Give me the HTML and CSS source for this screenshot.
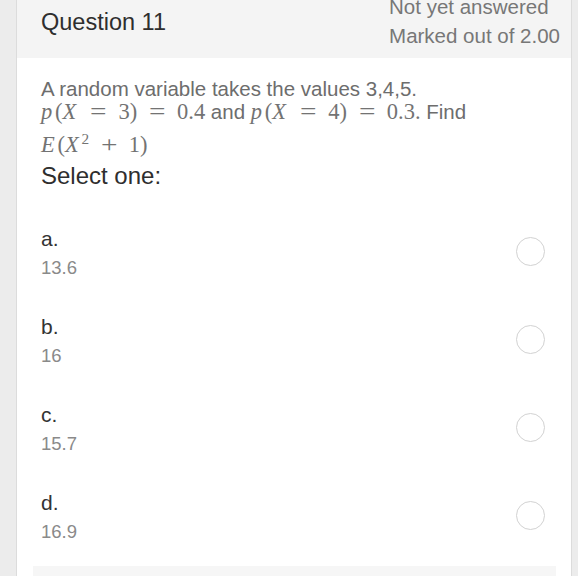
FILE: index.html
```html
<!DOCTYPE html>
<html lang="en">
<head>
  <meta charset="UTF-8">
  <meta name="viewport" content="width=device-width, initial-scale=1.0">
  <title>Question 11</title>
  <link rel="stylesheet" href="styles.css">
</head>
<body>
  <div class="page">
    <div class="card">
      <div class="que-header">
        <h3 class="que-title">Question 11</h3>
        <div class="que-status">
          <div>Not yet answered</div>
          <div>Marked out of 2.00</div>
        </div>
      </div>

      <div class="que-body">
        <div class="q-line">A random variable takes the values 3,4,5.</div>
        <div class="q-line">
          <span class="math"><i class="mi">p</i>(<i class="mi">X</i><span class="mo">=</span>3)<span class="mo">=</span>0.4</span>
          and
          <span class="math"><i class="mi">p</i>(<i class="mi">X</i><span class="mo">=</span>4)<span class="mo">=</span>0.3.</span>
          Find
        </div>
        <div class="q-line tall">
          <span class="math"><i class="mi">E</i>(<i class="mi">X</i><sup>2</sup><span class="mo">+</span>1)</span>
        </div>

        <div class="prompt">Select one:</div>

        <div class="answers">
          <label class="answer">
            <div class="answer-text">
              <div class="answer-letter">a.</div>
              <div class="answer-value">13.6</div>
            </div>
            <span class="radio"></span>
          </label>
          <label class="answer">
            <div class="answer-text">
              <div class="answer-letter">b.</div>
              <div class="answer-value">16</div>
            </div>
            <span class="radio"></span>
          </label>
          <label class="answer">
            <div class="answer-text">
              <div class="answer-letter">c.</div>
              <div class="answer-value">15.7</div>
            </div>
            <span class="radio"></span>
          </label>
          <label class="answer">
            <div class="answer-text">
              <div class="answer-letter">d.</div>
              <div class="answer-value">16.9</div>
            </div>
            <span class="radio"></span>
          </label>
        </div>
      </div>

      <div class="que-footer"></div>
    </div>
  </div>
</body>
</html>
```

FILE: styles.css
```css
body {
  margin: 0;
  font-family: "Liberation Sans", Arial, sans-serif;
  background-color: #ececec;
}
.page {
  padding: 0 6px 0 16px;
  height: 576px;
  overflow: hidden;
}
.card {
  background-color: #fff;
  border-left: 1px solid #dcdcdc;
  border-right: 1px solid #dcdcdc;
  min-height: 576px;
}
.que-header {
  display: flex;
  align-items: flex-start;
  height: 58px;
  padding: 0 11px 0 24px;
  background-color: #f4f4f4;
}
.que-title {
  margin: 8px 0 0;
  font-size: 23.5px;
  line-height: 28px;
  font-weight: normal;
  color: #2e2e2e;
}
.que-status {
  margin: -8px 0 0 auto;
  font-size: 20.5px;
  line-height: 29px;
  color: #777;
}
.que-body {
  padding: 19px 26px 0 24px;
}
.q-line {
  font-size: 20.5px;
  line-height: 23px;
  color: #6d6d6d;
  white-space: nowrap;
}
.q-line.tall {
  margin-top: 10px;
}
.math {
  font-family: "Liberation Serif", "Times New Roman", serif;
  font-size: 22.5px;
  line-height: 23px;
  color: #737373;
}
.mi {
  font-style: italic;
  margin-right: 0.12em;
}
.mo {
  display: inline-block;
  margin: 0 0.6em;
  transform: scaleX(1.3);
}
.math sup {
  font-size: 0.68em;
  line-height: 0;
  vertical-align: 0.5em;
}
.prompt {
  margin-top: 6px;
  font-size: 24px;
  line-height: 28px;
  color: #2e2e2e;
}
.answers {
  margin-top: 17px;
}
.answer {
  display: flex;
  align-items: center;
  justify-content: space-between;
  height: 88px;
}
.answer-letter {
  font-size: 21px;
  line-height: 34px;
  color: #333;
}
.answer-value {
  font-size: 18.5px;
  line-height: 24px;
  color: #8a8a8a;
}
.radio {
  width: 29px;
  height: 29px;
  box-sizing: border-box;
  border: 1.5px solid #d2d2d2;
  border-radius: 50%;
}
.que-footer {
  margin: 7px 15px 0 16px;
  height: 30px;
  background-color: #f6f6f6;
}
```
